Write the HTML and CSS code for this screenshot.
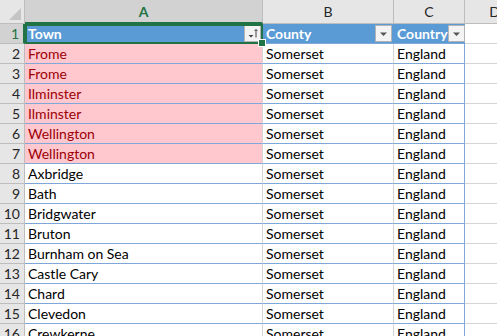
FILE: index.html
```html
<!DOCTYPE html>
<html>
<head>
<meta charset="utf-8">
<link rel="stylesheet" href="styles.css">
</head>
<body>
<div class="sheet">
  <div class="corner"><svg width="12" height="12" viewBox="0 0 12 12"><polygon points="12,0 12,12 0,12" fill="#c4c4c4"/></svg></div>
  <div class="colhead sel">A</div>
  <div class="colhead">B</div>
  <div class="colhead">C</div>
  <div class="colhead last">D</div>

  <div class="rowhead sel">1</div>
  <div class="cell th a1">Town<span class="fbtn"><svg width="15" height="15" viewBox="0 0 15 15"><polygon points="3.5,9 8.5,9 6,11.5" fill="#444"/><path d="M11 3.5 V11.5 M9.5 5 L11 3.5 L12.5 5" stroke="#444" stroke-width="1" fill="none"/></svg></span><span class="handle"></span></div>
  <div class="cell th">County<span class="fbtn"><svg width="15" height="15" viewBox="0 0 15 15"><polygon points="4,6.5 11,6.5 7.5,10" fill="#555"/></svg></span></div>
  <div class="cell th tr">Country<span class="fbtn"><svg width="15" height="15" viewBox="0 0 15 15"><polygon points="4,6.5 11,6.5 7.5,10" fill="#555"/></svg></span></div>
  <div class="cell out"></div>

  <div class="rowhead">2</div><div class="cell bad">Frome</div><div class="cell">Somerset</div><div class="cell tr">England</div><div class="cell out"></div>
  <div class="rowhead">3</div><div class="cell bad">Frome</div><div class="cell">Somerset</div><div class="cell tr">England</div><div class="cell out"></div>
  <div class="rowhead">4</div><div class="cell bad">Ilminster</div><div class="cell">Somerset</div><div class="cell tr">England</div><div class="cell out"></div>
  <div class="rowhead">5</div><div class="cell bad">Ilminster</div><div class="cell">Somerset</div><div class="cell tr">England</div><div class="cell out"></div>
  <div class="rowhead">6</div><div class="cell bad">Wellington</div><div class="cell">Somerset</div><div class="cell tr">England</div><div class="cell out"></div>
  <div class="rowhead">7</div><div class="cell bad">Wellington</div><div class="cell">Somerset</div><div class="cell tr">England</div><div class="cell out"></div>
  <div class="rowhead">8</div><div class="cell">Axbridge</div><div class="cell">Somerset</div><div class="cell tr">England</div><div class="cell out"></div>
  <div class="rowhead">9</div><div class="cell">Bath</div><div class="cell">Somerset</div><div class="cell tr">England</div><div class="cell out"></div>
  <div class="rowhead">10</div><div class="cell">Bridgwater</div><div class="cell">Somerset</div><div class="cell tr">England</div><div class="cell out"></div>
  <div class="rowhead">11</div><div class="cell">Bruton</div><div class="cell">Somerset</div><div class="cell tr">England</div><div class="cell out"></div>
  <div class="rowhead">12</div><div class="cell">Burnham on Sea</div><div class="cell">Somerset</div><div class="cell tr">England</div><div class="cell out"></div>
  <div class="rowhead">13</div><div class="cell">Castle Cary</div><div class="cell">Somerset</div><div class="cell tr">England</div><div class="cell out"></div>
  <div class="rowhead">14</div><div class="cell">Chard</div><div class="cell">Somerset</div><div class="cell tr">England</div><div class="cell out"></div>
  <div class="rowhead">15</div><div class="cell">Clevedon</div><div class="cell">Somerset</div><div class="cell tr">England</div><div class="cell out"></div>
  <div class="rowhead">16</div><div class="cell">Crewkerne</div><div class="cell">Somerset</div><div class="cell tr">England</div><div class="cell out"></div>
</div>
</body>
</html>
```

FILE: styles.css
```css
html, body {
  margin: 0;
  padding: 0;
  background: #ffffff;
  overflow: hidden;
}
.sheet {
  display: grid;
  grid-template-columns: 25px 238px 131px 71px 60px;
  grid-template-rows: 24px;
  grid-auto-rows: 20px;
  font-family: Lato, "Liberation Sans", sans-serif;
  font-size: 14px;
  color: #000;
}
.corner {
  background: #e6e6e6;
  border-right: 1px solid #bdbdbd;
  border-bottom: 1px solid #bdbdbd;
  display: flex;
  align-items: flex-end;
  justify-content: flex-end;
  padding: 0 3px 3px 0;
}
.colhead {
  background: #e6e6e6;
  border-right: 1px solid #bdbdbd;
  border-bottom: 1px solid #bdbdbd;
  display: flex;
  align-items: center;
  justify-content: center;
  color: #262626;
  font-size: 14px;
}
.colhead.sel {
  background: #d2d2d2;
  color: #217346;
  font-weight: bold;
  border-bottom: 2px solid #217346;
}
.rowhead {
  background: #e6e6e6;
  border-right: 1px solid #bdbdbd;
  border-bottom: 1px solid #bdbdbd;
  display: flex;
  align-items: center;
  justify-content: flex-end;
  padding-right: 4px;
  color: #262626;
  font-size: 14px;
}
.rowhead.sel {
  background: #d2d2d2;
  color: #217346;
  border-right: 2px solid #217346;
}
.cell {
  position: relative;
  border-right: 1px solid #d4d4d4;
  border-bottom: 1px solid #7fa7d9;
  display: flex;
  align-items: center;
  padding-left: 3px;
  white-space: nowrap;
  overflow: hidden;
}
.cell.tr {
  border-right: 1px solid #7fa7d9;
}
.cell.out {
  border-bottom: 1px solid #d4d4d4;
}
.cell.bad {
  background: #ffc7ce;
  color: #9c0006;
}
.cell.th {
  background: #5b9bd5;
  color: #ffffff;
  font-weight: bold;
  border-right-color: #5b9bd5;
  justify-content: space-between;
  padding-right: 1px;
  overflow: visible;
}
.cell.a1 {
  outline: 2px solid #217346;
  outline-offset: -2px;
}
.fbtn {
  width: 15px;
  height: 15px;
  background: #f3f3f3;
  border: 1px solid #b4b4b4;
  display: flex;
}
.handle {
  position: absolute;
  right: -4px;
  bottom: -4px;
  width: 6px;
  height: 6px;
  background: #217346;
  border: 1px solid #ffffff;
  z-index: 2;
}
```
